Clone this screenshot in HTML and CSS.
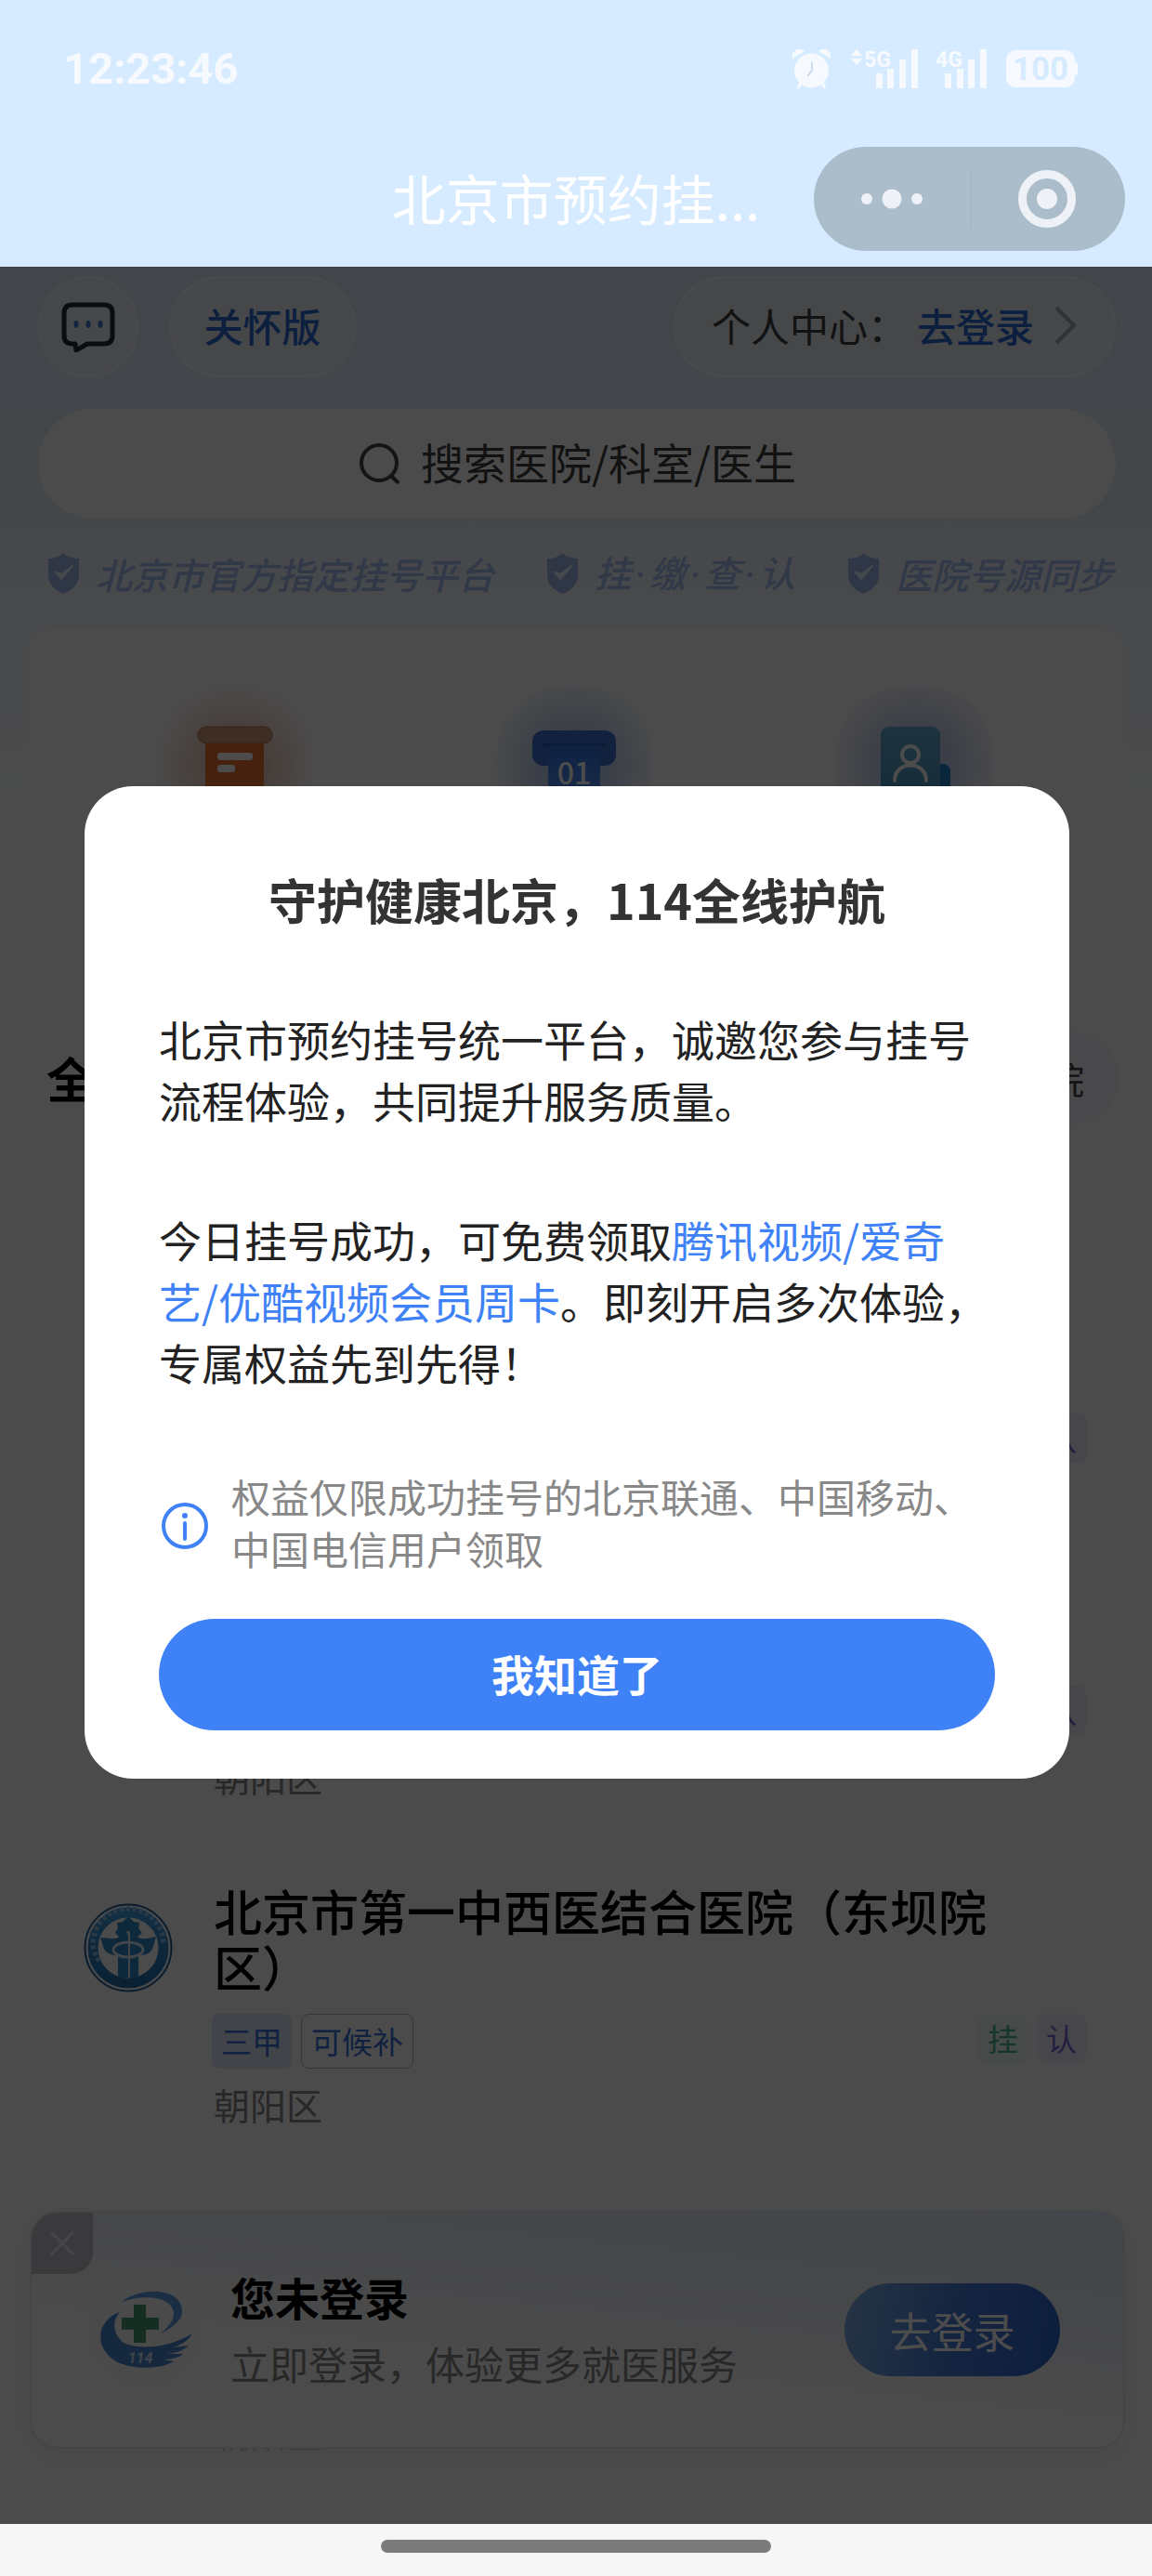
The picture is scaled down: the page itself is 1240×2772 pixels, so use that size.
FILE: index.html
```html
<!DOCTYPE html>
<html lang="zh-CN">
<head>
<meta charset="utf-8">
<meta name="viewport" content="width=device-width, initial-scale=1">
<title>北京市预约挂号统一平台</title>
<link rel="stylesheet" href="styles.css">
</head>
<body>
<svg class="defs" aria-hidden="true">
  <defs>
    <linearGradient id="g-emblem" x1="0" y1="0" x2="0" y2="1"><stop offset="0" stop-color="#3f9be0"/><stop offset="1" stop-color="#2370ad"/></linearGradient>
    <linearGradient id="g-orange" x1="0" y1="0" x2="0" y2="1"><stop offset="0" stop-color="#e66a26"/><stop offset="1" stop-color="#ee7a36"/></linearGradient>
    <linearGradient id="g-blue" x1="0" y1="0" x2="0" y2="1"><stop offset="0" stop-color="#3470dc"/><stop offset="1" stop-color="#5a98f4"/></linearGradient>
    <linearGradient id="g-teal" x1="0" y1="0" x2="0" y2="1"><stop offset="0" stop-color="#66a8cc"/><stop offset="1" stop-color="#4496c0"/></linearGradient>
    <symbol id="shield" viewBox="0 0 33 44">
      <path d="M16.500 0 C20 4 27 6 33 6 V24 C33 34 26 40 16.500 44 C7 40 0 34 0 24 V6 C6 6 13 4 16.500 0Z" fill="#9fb9ee"/>
      <path d="M8 21 L14 28 L26 14 L14 23Z" fill="#e6f0ff" stroke="#e6f0ff" stroke-width="2" stroke-linejoin="round"/>
    </symbol>
    <symbol id="emblem" viewBox="0 0 96 96">
      <circle cx="48" cy="48" r="46.500" fill="none" stroke="#1f5f9c" stroke-width="2"/>
      <circle cx="48" cy="48" r="38" fill="none" stroke="url(#g-emblem)" stroke-width="11"/>
      <path d="M17 62 A34 34 0 0 1 10 44 A38 38 0 0 1 86 44" fill="none" stroke="#8cc0ea" stroke-width="5" stroke-dasharray="4 3"/>
      <path d="M48 14 L54 20 L60 21 L59 27 L63 32 L58 36 C62 40 70 38 78 36 L75 46 C73 54 67 56 59 56 V80 H37 V56 C29 56 22 53 21 46 L18 37 C26 37 34 40 38 36 L34 32 L37 27 L36 21 L42 20Z" fill="#2f86c8"/>
      <path d="M46 30 H50 V80 H48 V36Z" fill="#dcecf8"/>
      <ellipse cx="48" cy="50" rx="16" ry="8" fill="none" stroke="#dcecf8" stroke-width="3"/>
    </symbol>
  </defs>
</svg>
<div class="screen">
  <header class="top">
    <div class="status">
      <time class="clock">12:23:46</time>
      <div class="status-icons">
        <svg width="43" height="44" viewBox="0 0 43 44" fill="#f6faff">
          <circle cx="21.500" cy="24" r="18.500"/>
          <path d="M1 11 C-1 3 8 -2 14 3Z M42 11 C44 3 35 -2 29 3Z"/>
          <path d="M10 37 L7 43 M33 37 L36 43" stroke="#f6faff" stroke-width="3"/>
          <path d="M22 15 V24 L17 30" fill="none" stroke="#c9dbee" stroke-width="2"/>
        </svg>
        <svg class="sig-a" width="73" height="44" viewBox="0 0 73 44" fill="#f6faff">
          <path d="M7 1 L13 8 H1Z M7 18 L13 11 H1Z"/>
          <text x="15" y="20" class="net">5G</text>
          <rect x="28" y="27" width="7" height="16" rx="1"/><rect x="40" y="22" width="7" height="21" rx="1"/><rect x="53" y="12" width="7" height="31" rx="1"/><rect x="66" y="1" width="7" height="42" rx="1"/>
        </svg>
        <svg class="sig-b" width="56" height="44" viewBox="0 0 56 44" fill="#f6faff">
          <text x="1" y="20" class="net">4G</text>
          <rect x="11" y="27" width="7" height="16" rx="1"/><rect x="24" y="22" width="7" height="21" rx="1"/><rect x="36" y="12" width="7" height="31" rx="1"/><rect x="49" y="1" width="7" height="42" rx="1"/>
        </svg>
        <span class="battery">100</span>
      </div>
    </div>
    <div class="nav">
      <h1 class="nav-title">北京市预约挂...</h1>
      <div class="capsule">
        <button class="cap-btn" type="button" aria-label="更多"><svg width="66" height="22" viewBox="0 0 66 22" fill="#eef2f6"><circle cx="6" cy="11" r="6"/><circle cx="33" cy="11" r="10.500"/><circle cx="60" cy="11" r="6"/></svg></button>
        <button class="cap-btn" type="button" aria-label="关闭小程序"><svg width="62" height="62" viewBox="0 0 62 62"><circle cx="31" cy="31" r="26.500" fill="none" stroke="#eef2f6" stroke-width="9"/><circle cx="31" cy="31" r="11" fill="#eef2f6"/></svg></button>
      </div>
    </div>
  </header>

  <main class="app">
    <div class="bar">
      <button class="round" type="button" aria-label="消息">
        <svg width="58" height="54" viewBox="0 0 58 54"><path d="M12 3 H46 Q55 3 55 12 V36 Q55 45 46 45 H28 L16 52 L15 45 H12 Q3 45 3 36 V12 Q3 3 12 3Z" fill="none" stroke="#222b38" stroke-width="5" stroke-linejoin="round"/><g fill="#3f78d8"><ellipse cx="16" cy="24" rx="2.500" ry="4"/><ellipse cx="29" cy="24" rx="2.500" ry="4"/><ellipse cx="42" cy="24" rx="2.500" ry="4"/></g></svg>
      </button>
      <button class="pill care" type="button">关怀版</button>
      <a class="pill account" href="#login">个人中心：<b>去登录</b><svg width="26" height="44" viewBox="0 0 26 44"><path d="M3 3 L22 22 L3 41" fill="none" stroke="#a4a8ac" stroke-width="4"/></svg></a>
    </div>

    <label class="search">
      <svg width="44" height="44" viewBox="0 0 44 44" fill="none" stroke="#444" stroke-width="4"><circle cx="21" cy="21" r="19"/><path d="M33 34 L42 43"/></svg>
      <input type="text" placeholder="搜索医院/科室/医生" aria-label="搜索">
    </label>

    <ul class="promises">
      <li><svg width="33" height="44"><use href="#shield"/></svg>北京市官方指定挂号平台</li>
      <li><svg width="33" height="44"><use href="#shield"/></svg><span>挂<i>·</i>缴<i>·</i>查<i>·</i>认</span></li>
      <li><svg width="33" height="44"><use href="#shield"/></svg>医院号源同步</li>
    </ul>

    <section class="services">
      <a class="service orange" href="#register" aria-label="预约挂号">
        <svg width="90" height="90" viewBox="0 0 90 90"><path d="M13 18 H76 V86 H13Z" fill="url(#g-orange)"/><rect x="5" y="4" width="80" height="18" rx="9" fill="#cc9678" stroke="#b87450" stroke-width="1"/><rect x="26" y="32" width="38" height="8" rx="3" fill="#fff"/><rect x="26" y="45" width="19" height="8" rx="3" fill="#fff"/></svg>
      </a>
      <a class="service blue" href="#number" aria-label="取号">
        <svg width="92" height="90" viewBox="0 0 92 90"><rect x="1" y="8" width="90" height="38" rx="12" fill="#3a6fd0"/><path d="M14 24 H78" stroke="#2c5cb8" stroke-width="4" stroke-linecap="round"/><path d="M18 24 H74 V88 H18Z" fill="url(#g-blue)"/><text x="46" y="66" text-anchor="middle" class="ticket">01</text></svg>
      </a>
      <a class="service teal" href="#record" aria-label="健康档案">
        <svg width="78" height="90" viewBox="0 0 78 90"><rect x="50" y="44" width="27" height="44" rx="8" fill="#1f7fc8"/><rect x="2" y="4" width="64" height="84" rx="9" fill="url(#g-teal)"/><circle cx="34" cy="34" r="9" fill="none" stroke="#fff" stroke-width="4"/><path d="M17 62 C17 40 51 40 51 62" fill="none" stroke="#fff" stroke-width="4" stroke-linecap="round"/></svg>
      </a>
    </section>

    <div class="list-head">
      <h2>全部医院</h2>
      <a class="more" href="#all">更多医院</a>
    </div>

    <ul class="hospitals">
      <li class="hospital">
        <span class="crest"></span>
        <div class="info"><h3>北京朝阳医院</h3><div class="tags"><span class="tag level">三甲</span><span class="svc book">挂</span><span class="svc share">认</span></div><p>朝阳区</p></div>
      </li>
      <li class="hospital">
        <span class="crest"></span>
        <div class="info"><h3>中日友好医院</h3><div class="tags"><span class="tag level">三甲</span><span class="svc book">挂</span><span class="svc share">认</span></div><p>朝阳区</p></div>
      </li>
      <li class="hospital">
        <span class="crest"><svg width="96" height="96"><use href="#emblem"/></svg></span>
        <div class="info"><h3>北京市第一中西医结合医院（东坝院区）</h3><div class="tags"><span class="tag level">三甲</span><span class="tag wait">可候补</span><span class="svc book">挂</span><span class="svc share">认</span></div><p>朝阳区</p></div>
      </li>
      <li class="hospital">
        <span class="crest"></span>
        <div class="info"><h3>北京市第一中西医结合医院（东坝南院区）</h3><div class="tags"><span class="tag level">三甲</span></div><p>朝阳区</p></div>
      </li>
    </ul>

    <aside class="login">
      <button class="close" type="button" aria-label="关闭"><svg width="26" height="26" viewBox="0 0 26 26"><path d="M1 1 L25 25 M25 1 L1 25" stroke="#e8ebf2" stroke-width="3"/></svg></button>
      <span class="logo">
        <svg width="102" height="84" viewBox="0 0 102 84"><path d="M26 12 C46 -4 88 -4 91 20 C92 30 84 38 68 46 C80 36 84 28 81 20 C76 6 48 4 26 12Z" fill="#5a9be0"/><path d="M24 23 C14 34 18 48 28 56 C46 64 76 62 102 46 C98 54 90 58 82 61 L98 59 C92 65 84 67 74 68 L92 68 C88 72 78 74 70 74 L82 76 C70 84 38 86 20 76 C-4 62 -2 32 24 23Z" fill="#4a86cc"/><path d="M39 15 H52 V29 H66 V42 H52 V56 H39 V42 H26 V29 H39Z" fill="#4a9c74"/><text x="46" y="78" text-anchor="middle" class="mark">114</text></svg>
      </span>
      <div class="login-text"><strong>您未登录</strong><p>立即登录，体验更多就医服务</p></div>
      <button class="login-btn" type="button">去登录</button>
    </aside>

    <div class="mask">
      <section class="dialog" role="dialog" aria-modal="true" aria-labelledby="dialog-title">
        <h2 id="dialog-title">守护健康北京，114全线护航</h2>
        <p class="copy">北京市预约挂号统一平台，诚邀您参与挂号流程体验，共同提升服务质量。</p>
        <p class="copy">今日挂号成功，可免费领取<em>腾讯视频/爱奇<br>艺/优酷视频会员周卡</em>。即刻开启多次体验，专属权益先到先得！</p>
        <div class="note">
          <svg width="52" height="60" viewBox="0 -8 52 60"><circle cx="26" cy="26" r="23" fill="none" stroke="#3f82f7" stroke-width="4"/><circle cx="26" cy="15" r="3" fill="#3f82f7"/><path d="M26 23 V40" stroke="#3f82f7" stroke-width="4" stroke-linecap="round"/></svg>
          <p>权益仅限成功挂号的北京联通、中国移动、中国电信用户领取</p>
        </div>
        <button class="ok" type="button">我知道了</button>
      </section>
    </div>
  </main>

  <footer class="home"><span></span></footer>
</div>
</body>
</html>
```
FILE: styles.css
```css
* { box-sizing: border-box; }
body, h1, h2, h3, p, ul { margin: 0; padding: 0; }
body { font-family: "Noto Sans CJK SC", sans-serif; font-size: 42px; color: #222; background: #f6f6f6; }
ul { list-style: none; }
a { color: inherit; text-decoration: none; }
button { font: inherit; color: inherit; border: 0; padding: 0; background: none; }
em, i { font-style: inherit; }
svg { display: block; flex: none; }
.defs { position: absolute; width: 0; height: 0; }
.screen { display: flex; flex-direction: column; min-height: 100vh; }

/* status bar and navigation */
.top { background: #d6ebff; }
.status { display: flex; justify-content: space-between; align-items: center; height: 140px; padding: 8px 83px 0 68px; }
.clock { font: 700 47px/56px Roboto, sans-serif; color: #f6faff; }
.status-icons { display: flex; align-items: center; }
.sig-a { margin-left: 20px; }
.sig-b { margin-left: 18px; }
.net { font: 700 23px Roboto, sans-serif; }
.battery { position: relative; width: 74px; height: 40px; margin-left: 21px; border-radius: 10px; background: #f6faff; color: #d6ebff; font: 700 35px/41px Roboto, sans-serif; text-align: center; }
.battery::after { content: ""; position: absolute; right: -3px; top: 13px; width: 5px; height: 14px; border-radius: 2px; background: #f6faff; }
.nav { display: grid; grid-template-columns: 1fr auto 1fr; align-items: center; height: 147px; padding: 0 29px; }
.nav-title { grid-column: 2; padding-bottom: 4px; font-size: 58px; line-height: 72px; font-weight: 400; color: #fff; }
.capsule { justify-self: end; display: flex; width: 335px; height: 112px; border-radius: 56px; background: #abbccb; }
.cap-btn { flex: 1; display: grid; place-items: center; }
.cap-btn + .cap-btn { position: relative; }
.cap-btn + .cap-btn::before { content: ""; position: absolute; left: 0; top: 24px; bottom: 24px; width: 2px; background: #a5b6c6; }

/* application page */
.app { position: relative; flex: 1; padding: 10px 0 73px; background: linear-gradient(#dbe9fa 0, #e4eef8 260px, #f3f7fd 400px, #fcfcfc 640px); }
.bar { display: flex; gap: 33px; padding: 0 39px 0 41px; }
.round, .pill { height: 109px; border-radius: 56px; border: 2px solid #f4f7fb; background: #e6edf4; }
.round { width: 108px; display: grid; place-items: center; }
.pill { display: flex; align-items: center; justify-content: center; padding-bottom: 4px; line-height: 60px; }
.care { width: 201px; color: #2c68d4; font-weight: 500; }
.account { margin-left: auto; width: 476px; color: #3c3c3c; }
.account b { font-weight: 500; color: #2c68d4; margin-right: 21px; margin-left: 11px; }
.search { display: flex; justify-content: center; align-items: center; gap: 22px; height: 118px; margin: 34px 39px 0 41px; padding-left: 6px; border-radius: 59px; background: #fcfcfc; }
.search input { width: 408px; height: 70px; padding: 0 0 6px; border: 0; background: none; font: inherit; font-size: 46px; }
.search input::placeholder { color: #3c3c3c; opacity: 1; }
.promises { display: flex; justify-content: space-between; margin: 33px 42px 0 52px; font-size: 39px; line-height: 48px; font-style: italic; font-weight: 500; color: #a5bbee; }
.promises li { display: flex; align-items: center; gap: 18px; }
.promises i { display: inline-block; width: 20px; text-align: center; font-family: Roboto, sans-serif; }

.services { display: grid; grid-template-columns: repeat(3, 1fr); justify-items: center; height: 385px; margin: 34px 30px 0; padding: 62px 17px 0 13px; border-radius: 28px; background: #fcfcfc; }
.service { width: 168px; height: 168px; border-radius: 72px; display: grid; place-items: center; }
.service.orange { justify-self: start; margin-left: 126px; background: radial-gradient(#ecd0c2 30%, #fbf8f6 70%); }
.service.blue { background: radial-gradient(#c2d0ee 30%, #f0f3fb 70%); }
.service.teal { justify-self: end; margin-right: 124px; background: radial-gradient(#c6d0ee 30%, #f0f2fb 70%); }
.ticket { font: 500 32px "Noto Sans CJK SC", sans-serif; fill: #fff; }

.list-head { display: flex; justify-content: space-between; align-items: center; height: 100px; margin: 48px 35px 0 50px; }
.list-head h2 { font-size: 52px; line-height: 60px; font-weight: 700; color: #000; }
.more { width: 240px; height: 100px; padding-right: 38px; border-radius: 50px; background: #f4f6fb; color: #444; font-size: 39px; line-height: 100px; text-align: right; }

.hospitals { display: grid; gap: 91px; margin: 230px 71px 0 75px; }
.hospital { display: flex; gap: 30px; }
.crest { flex: none; width: 125px; height: 140px; display: grid; place-items: center; }
.info { flex: 1; }
.info h3 { padding-right: 80px; font-size: 52px; line-height: 60px; font-weight: 500; color: #000; }
.tags { display: flex; gap: 10px; height: 59px; margin: 21px 0 14px -2px; font-size: 33px; line-height: 57px; }
.tag { padding: 0 10px; border-radius: 8px; color: #3a70d8; }
.level { background: #dbe3f6; line-height: 59px; }
.wait { border: 1px solid #a9b4cc; }
.svc { width: 53px; height: 53px; border-radius: 8px; line-height: 53px; text-align: center; }
.book { margin-left: auto; background: #ebf7f2; color: #46b48c; }
.share { background: #e9e9fa; color: #7468d8; }
.info p { font-size: 39px; line-height: 48px; color: #858585; }

/* login prompt pinned to the foot of the page */
.login { position: absolute; left: 32px; right: 29px; bottom: 81px; height: 256px; display: flex; align-items: center; padding: 0 68px 0 60px; border: 2px solid #dfe6ee; border-radius: 30px; background: linear-gradient(186deg, #dde8f6 0, #eceff6 35%, #fafafb 60%, #fafafa); box-shadow: 0 8px 30px #f0f0f0; }
.close { position: absolute; left: 0; top: 0; width: 66px; height: 66px; display: grid; place-items: center; border-radius: 28px 0 24px 0; background: #c2c4cd; }
.logo { width: 124px; height: 124px; border-radius: 50%; background: #f8f9fb; display: grid; place-items: center; }
.mark { font: italic 700 16px Roboto, sans-serif; fill: #cfe0f4; }
.login-text { margin-left: 30px; flex: 1; line-height: 72px; color: #858585; }
.login-text strong { display: block; font-size: 48px; font-weight: 700; color: #000; }
.login-btn { width: 232px; height: 100px; border-radius: 50px; background: linear-gradient(100deg, #7eaee0, #467cd8 50%, #2c62cc); color: #fff; font-size: 45px; }

/* notice dialog */
.mask { position: absolute; inset: 0; padding: 559px 89px 0 91px; background: rgba(0, 0, 0, .7); }
.dialog { display: flex; flex-direction: column; gap: 84px; padding: 90px 80px 52px; border-radius: 52px; background: #fff; }
.dialog h2 { font-size: 52px; line-height: 64px; font-weight: 700; color: #333; text-align: center; }
.copy { font-size: 46px; line-height: 66px; }
.copy em { color: #3f82f7; }
.note { display: flex; align-items: center; gap: 24px; padding-left: 2px; font-size: 42px; line-height: 56px; color: #888; }
.ok { height: 120px; margin-top: -36px; padding-bottom: 4px; border-radius: 60px; background: #3f82f7; color: #fff; font-size: 46px; font-weight: 700; }

.home { display: grid; place-items: center; height: 56px; padding-bottom: 8px; background: #f6f6f6; }
.home span { width: 420px; height: 14px; border-radius: 7px; background: #7b7b7b; }
```
